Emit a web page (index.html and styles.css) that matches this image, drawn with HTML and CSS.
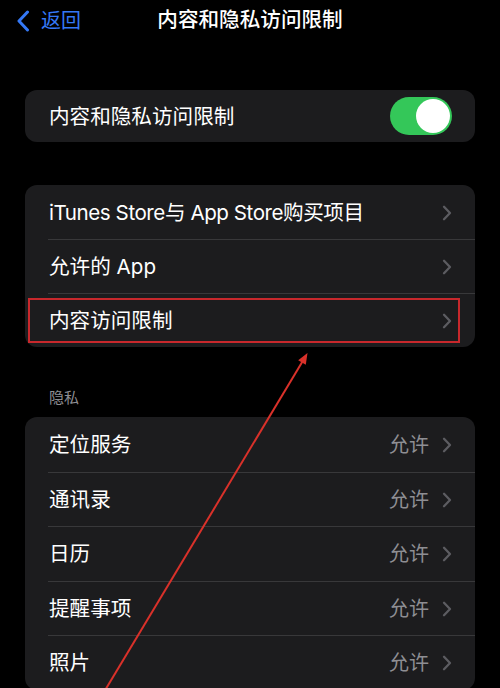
FILE: index.html
```html
<!DOCTYPE html>
<html lang="zh-CN">
<head>
<meta charset="utf-8">
<title>内容和隐私访问限制</title>
<link rel="stylesheet" href="styles.css">
</head>
<body>
<div class="screen">
  <header class="nav">
    <div class="back">
      <svg class="back-icon" width="14" height="22" viewBox="0 0 14 22"><polyline points="11.5,2 3,11 11.5,20" fill="none" stroke="#3478f6" stroke-width="3" stroke-linecap="round" stroke-linejoin="round"/></svg>
      <span class="back-text">返回</span>
    </div>
    <div class="title">内容和隐私访问限制</div>
  </header>

  <section class="card card-first">
    <div class="row row-toggle">
      <span class="label">内容和隐私访问限制</span>
      <span class="toggle"><span class="knob"></span></span>
    </div>
  </section>

  <section class="card card-second">
    <div class="row">
      <span class="label label-latin">iTunes Store与 App Store购买项目</span>
      <span class="trail"><svg class="chev" width="10" height="16" viewBox="0 0 10 16"><polyline points="2,1.8 8,8 2,14.2" fill="none" stroke="#5c5c61" stroke-width="2.3" stroke-linecap="round" stroke-linejoin="round"/></svg></span>
    </div>
    <div class="row">
      <span class="label">允许的 App</span>
      <span class="trail"><svg class="chev" width="10" height="16" viewBox="0 0 10 16"><polyline points="2,1.8 8,8 2,14.2" fill="none" stroke="#5c5c61" stroke-width="2.3" stroke-linecap="round" stroke-linejoin="round"/></svg></span>
    </div>
    <div class="row row-marked">
      <span class="label">内容访问限制</span>
      <span class="trail"><svg class="chev" width="10" height="16" viewBox="0 0 10 16"><polyline points="2,1.8 8,8 2,14.2" fill="none" stroke="#5c5c61" stroke-width="2.3" stroke-linecap="round" stroke-linejoin="round"/></svg></span>
      <span class="highlight"></span>
    </div>
  </section>

  <div class="section-label">隐私</div>

  <section class="card card-third">
    <div class="row">
      <span class="label">定位服务</span>
      <span class="trail"><span class="value">允许</span><svg class="chev" width="10" height="16" viewBox="0 0 10 16"><polyline points="2,1.8 8,8 2,14.2" fill="none" stroke="#5c5c61" stroke-width="2.3" stroke-linecap="round" stroke-linejoin="round"/></svg></span>
    </div>
    <div class="row">
      <span class="label">通讯录</span>
      <span class="trail"><span class="value">允许</span><svg class="chev" width="10" height="16" viewBox="0 0 10 16"><polyline points="2,1.8 8,8 2,14.2" fill="none" stroke="#5c5c61" stroke-width="2.3" stroke-linecap="round" stroke-linejoin="round"/></svg></span>
    </div>
    <div class="row">
      <span class="label">日历</span>
      <span class="trail"><span class="value">允许</span><svg class="chev" width="10" height="16" viewBox="0 0 10 16"><polyline points="2,1.8 8,8 2,14.2" fill="none" stroke="#5c5c61" stroke-width="2.3" stroke-linecap="round" stroke-linejoin="round"/></svg></span>
    </div>
    <div class="row">
      <span class="label">提醒事项</span>
      <span class="trail"><span class="value">允许</span><svg class="chev" width="10" height="16" viewBox="0 0 10 16"><polyline points="2,1.8 8,8 2,14.2" fill="none" stroke="#5c5c61" stroke-width="2.3" stroke-linecap="round" stroke-linejoin="round"/></svg></span>
    </div>
    <div class="row">
      <span class="label">照片</span>
      <span class="trail"><span class="value">允许</span><svg class="chev" width="10" height="16" viewBox="0 0 10 16"><polyline points="2,1.8 8,8 2,14.2" fill="none" stroke="#5c5c61" stroke-width="2.3" stroke-linecap="round" stroke-linejoin="round"/></svg></span>
    </div>
  </section>

  <svg class="arrow" width="500" height="688" viewBox="0 0 500 688">
    <line x1="104" y1="692" x2="304" y2="359" stroke="#d9312a" stroke-width="2"/>
    <polygon points="307.5,353 305.8,364.8 298.2,360.3" fill="#d9312a"/>
  </svg>
</div>
</body>
</html>
```

FILE: styles.css
```css
* { box-sizing: border-box; }

html, body {
  margin: 0;
  padding: 0;
  background: #000;
}

body {
  font-family: Inter, "Noto Sans CJK SC", "Noto Sans", sans-serif;
  color: #fff;
}

.screen {
  position: relative;
  width: 500px;
  height: 688px;
  overflow: hidden;
  background: #000;
}

.nav {
  position: relative;
  height: 42px;
  display: flex;
  align-items: center;
  justify-content: center;
}

.back {
  position: absolute;
  left: 16px;
  top: 10px;
  display: flex;
  align-items: center;
  gap: 11px;
  height: 22px;
}

.back-icon { display: block; }

.back-text {
  font-size: 20px;
  color: #3478f6;
  line-height: 22px;
}

.title {
  font-size: 20.6px;
  font-weight: 500;
  line-height: 22px;
  margin-top: -2px;
}

.card {
  margin: 0 25px;
  background: #1c1c1e;
  border-radius: 12px;
}

.card-first { margin-top: 48px; }
.card-second { margin-top: 43px; }
.card-third { margin-top: 9px; }

.row {
  position: relative;
  height: 54px;
  display: flex;
  align-items: center;
  justify-content: space-between;
  padding: 2px 23px 0 24px;
}

.row + .row::before {
  content: "";
  position: absolute;
  left: 23px;
  right: 0;
  top: 0;
  height: 1px;
  background: #38383a;
}

.card-third .row { height: 54.5px; }

.row-toggle {
  height: 52px;
  padding-top: 0;
}

.row-toggle .label { margin-top: 2px; }

.label {
  font-size: 20.6px;
  line-height: 24px;
  color: #fff;
}

.label-latin {
  letter-spacing: -0.45px;
}

.trail {
  display: flex;
  align-items: center;
  gap: 13px;
}

.value {
  font-size: 20px;
  color: #8e8e93;
  line-height: 24px;
}

.chev { display: block; }

.toggle {
  width: 62px;
  height: 38px;
  border-radius: 19px;
  background: #34c759;
  display: flex;
  align-items: center;
  justify-content: flex-end;
  padding-right: 2px;
}

.knob {
  width: 34px;
  height: 34px;
  border-radius: 50%;
  background: #fff;
}

.highlight {
  position: absolute;
  left: 3px;
  right: 15px;
  top: 5px;
  bottom: 4px;
  border: 2px solid #c8282c;
  pointer-events: none;
}

.section-label {
  margin: 41px 0 0 49px;
  font-size: 15px;
  line-height: 20px;
  color: #8d8d92;
}

.arrow {
  position: absolute;
  left: 0;
  top: 0;
  pointer-events: none;
}
```
